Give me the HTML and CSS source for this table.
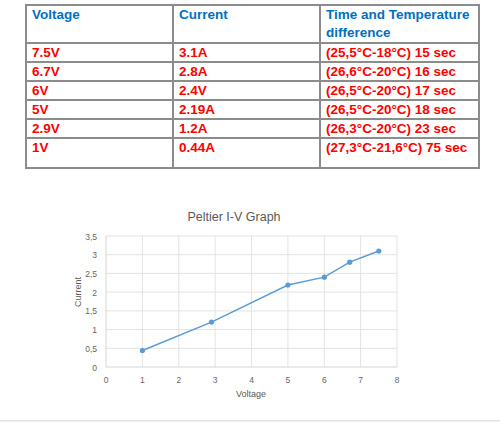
FILE: index.html
```html
<!DOCTYPE html>
<html lang="en">
<head>
    <meta charset="UTF-8">
    <meta name="viewport" content="width=device-width, initial-scale=1.0">
    <title>Peltier I-V Measurements</title>
    <link rel="stylesheet" href="styles.css">
</head>
<body>
    <table class="results">
        <tr class="head">
            <th class="col-v">Voltage</th>
            <th class="col-a">Current</th>
            <th class="col-t">Time and Temperature difference</th>
        </tr>
        <tr><td>7.5V</td><td>3.1A</td><td>(25,5°C-18°C) 15 sec</td></tr>
        <tr><td>6.7V</td><td>2.8A</td><td>(26,6°C-20°C) 16 sec</td></tr>
        <tr><td>6V</td><td>2.4V</td><td>(26,5°C-20°C) 17 sec</td></tr>
        <tr><td>5V</td><td>2.19A</td><td>(26,5°C-20°C) 18 sec</td></tr>
        <tr><td>2.9V</td><td>1.2A</td><td>(26,3°C-20°C) 23 sec</td></tr>
        <tr class="last"><td>1V</td><td>0.44A</td><td>(27,3°C-21,6°C) 75 sec</td></tr>
    </table>

    <svg class="chart" viewBox="0 190 500 228" width="500" height="228">
        <text class="title" x="234" y="219">Peltier I-V Graph</text>

        <!-- grid -->
        <g class="grid">
            <line x1="106" y1="234" x2="397" y2="234"/>
            <line x1="106" y1="252.7" x2="397" y2="252.7"/>
            <line x1="106" y1="271.4" x2="397" y2="271.4"/>
            <line x1="106" y1="290.1" x2="397" y2="290.1"/>
            <line x1="106" y1="308.9" x2="397" y2="308.9"/>
            <line x1="106" y1="327.6" x2="397" y2="327.6"/>
            <line x1="106" y1="346.3" x2="397" y2="346.3"/>
            <line x1="142.4" y1="234" x2="142.4" y2="365"/>
            <line x1="178.8" y1="234" x2="178.8" y2="365"/>
            <line x1="215.1" y1="234" x2="215.1" y2="365"/>
            <line x1="251.5" y1="234" x2="251.5" y2="365"/>
            <line x1="287.9" y1="234" x2="287.9" y2="365"/>
            <line x1="324.3" y1="234" x2="324.3" y2="365"/>
            <line x1="360.6" y1="234" x2="360.6" y2="365"/>
            <line x1="397" y1="234" x2="397" y2="365"/>
        </g>
        <g class="axis">
            <line x1="106" y1="234" x2="106" y2="365"/>
            <line x1="106" y1="365" x2="397" y2="365"/>
        </g>

        <g class="ylabels">
            <text x="97" y="237.5">3,5</text>
            <text x="97" y="256.2">3</text>
            <text x="97" y="274.9">2,5</text>
            <text x="97" y="293.6">2</text>
            <text x="97" y="312.4">1,5</text>
            <text x="97" y="331.1">1</text>
            <text x="97" y="349.8">0,5</text>
            <text x="97" y="368.5">0</text>
        </g>
        <g class="xlabels">
            <text x="106" y="380.5">0</text>
            <text x="142.4" y="380.5">1</text>
            <text x="178.8" y="380.5">2</text>
            <text x="215.1" y="380.5">3</text>
            <text x="251.5" y="380.5">4</text>
            <text x="287.9" y="380.5">5</text>
            <text x="324.3" y="380.5">6</text>
            <text x="360.6" y="380.5">7</text>
            <text x="397" y="380.5">8</text>
        </g>

        <text class="axis-title" x="251" y="395">Voltage</text>
        <text class="axis-title" x="0" y="0" transform="translate(81 290) rotate(-90)">Current</text>

        <polyline class="series" points="142.4,348.5 211.5,320.1 287.9,283 324.3,275.2 349.7,260.2 378.8,249"/>
        <g class="marker">
            <circle cx="142.4" cy="348.5" r="2.6"/>
            <circle cx="211.5" cy="320.1" r="2.6"/>
            <circle cx="287.9" cy="283" r="2.6"/>
            <circle cx="324.3" cy="275.2" r="2.6"/>
            <circle cx="349.7" cy="260.2" r="2.6"/>
            <circle cx="378.8" cy="249" r="2.6"/>
        </g>
    </svg>

    <div class="strip"></div>
</body>
</html>
```

FILE: styles.css
```css
html, body {
    margin: 0;
    padding: 0;
    background: #fff;
    overflow: hidden;
}

body {
    font-family: "Liberation Sans", Arial, sans-serif;
}

.results {
    border-collapse: collapse;
    margin: 4px 0 0 25px;
    width: 455px;
    table-layout: fixed;
    font-size: 13.5px;
    font-weight: bold;
}

    .results th,
    .results td {
        box-sizing: border-box;
        border: 2px solid #8c8c8c;
        padding: 1px 4px 0 5px;
        text-align: left;
        vertical-align: top;
        line-height: 16px;
        height: 19px;
        color: #ff0000;
        white-space: nowrap;
    }

    .results th {
        color: #0070c0;
        height: 38px;
        line-height: 18px;
        padding-top: 0;
        white-space: normal;
    }

    .results .col-v {
        width: 147px;
    }

    .results .col-a {
        width: 147px;
    }

    .results .last td {
        height: 30px;
    }

.chart {
    display: block;
    margin-top: 23px;
    font-family: "Liberation Sans", Arial, sans-serif;
}

    .chart .title {
        font-size: 12.5px;
        fill: #595959;
        text-anchor: middle;
    }

    .chart .grid line {
        stroke: #e3e3e3;
        stroke-width: 1;
    }

    .chart .axis line {
        stroke: #d4d4d4;
        stroke-width: 1;
    }

    .chart .ylabels text {
        font-size: 8.5px;
        fill: #666;
        text-anchor: end;
    }

    .chart .xlabels text {
        font-size: 8.5px;
        fill: #666;
        text-anchor: middle;
    }

    .chart .axis-title {
        font-size: 9px;
        fill: #595959;
        text-anchor: middle;
    }

    .chart .series {
        fill: none;
        stroke: #5b9bd5;
        stroke-width: 1.4;
    }

    .chart .marker circle {
        fill: #5b9bd5;
    }

.strip {
    height: 3px;
    background: #f0f0f0;
    border-top: 1px solid #e2e2e2;
}
```
